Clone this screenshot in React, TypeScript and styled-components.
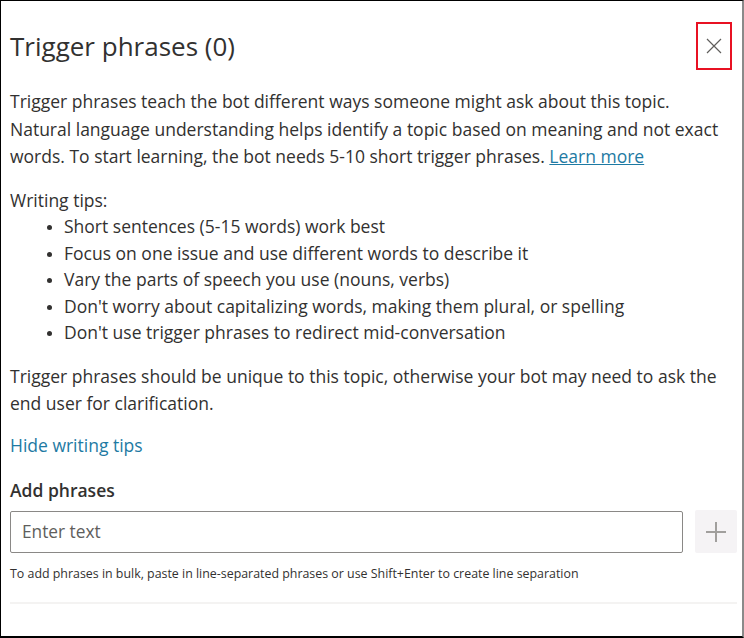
import React from "react";
import styled, { createGlobalStyle } from "styled-components";

const Global = createGlobalStyle`
  html, body { margin: 0; padding: 0; background: #fff; }
  body { font-family: "Open Sans", "Noto Sans", Arial, sans-serif; color: #323130; }
  * { box-sizing: border-box; }
`;

const Frame = styled.div`
  width: 744px;
  height: 638px;
  border-top: 1px solid #000;
  border-left: 1px solid #000;
  border-bottom: 2px solid #000;
  border-right: 2px solid #8a8a8a;
  background: #fff;
  overflow: hidden;
`;

const Panel = styled.div`
  padding: 0 5px 0 9px;
  display: flex;
  flex-direction: column;
`;

const Header = styled.header`
  display: flex;
  align-items: center;
  justify-content: space-between;
  margin-top: 21px;
  height: 48px;
`;

const Title = styled.h1`
  margin: 0;
  font-size: 26px;
  font-weight: 400;
  line-height: 48px;
  color: #323130;
`;

const CloseButton = styled.button`
  width: 36px;
  height: 48px;
  margin-right: 5px;
  border: 2px solid #e81123;
  background: #fff;
  padding: 0;
  display: flex;
  align-items: center;
  justify-content: center;
  cursor: pointer;
`;

const Text = styled.p<{ $mt: number; $lh?: number }>`
  margin: ${(p) => p.$mt}px 0 0;
  font-size: 17.5px;
  line-height: ${(p) => p.$lh ?? 27.5}px;
  color: #323130;
  white-space: nowrap;
`;

const Link = styled.a`
  color: #1e7aa3;
  text-decoration: underline;
  cursor: pointer;
`;

const Tips = styled.div`
  margin-top: 16px;
  font-size: 17.5px;
  line-height: 26.6px;
`;

const TipList = styled.ul`
  margin: 0;
  padding-left: 54px;
  list-style: disc;
  li::marker { font-size: 14px; }
`;

const PlainLink = styled.a`
  display: block;
  margin-top: 15px;
  font-size: 17.5px;
  line-height: 27px;
  color: #1e7aa3;
  cursor: pointer;
`;

const Label = styled.div`
  margin-top: 18px;
  font-size: 17.5px;
  font-weight: 600;
  line-height: 27px;
  color: #323130;
`;

const InputRow = styled.div`
  display: flex;
  align-items: center;
  gap: 12px;
  margin-top: 6px;
`;

const Input = styled.input`
  flex: 1;
  height: 42px;
  border: 1px solid #8a8886;
  border-radius: 2px;
  padding: 0 11px;
  font-family: inherit;
  font-size: 17.3px;
  color: #323130;
  outline: none;
  &::placeholder { color: #605e5c; }
`;

const AddButton = styled.button`
  width: 42px;
  height: 43px;
  border: none;
  border-radius: 2px;
  background: #f5f3f5;
  display: flex;
  align-items: center;
  justify-content: center;
  padding: 0;
`;

const Helper = styled.div`
  margin-top: 13px;
  font-size: 12.4px;
  line-height: 16px;
  color: #323130;
  white-space: nowrap;
`;

const Divider = styled.hr`
  margin: 20px 0 0;
  border: none;
  height: 2px;
  background: #f4f3f2;
`;

export default function App() {
  return (
    <>
      <Global />
      <Frame>
        <Panel>
          <Header>
            <Title>Trigger phrases (0)</Title>
            <CloseButton aria-label="Close">
              <svg width="18" height="18" viewBox="0 0 18 18">
                <path d="M2 2 L16 16 M16 2 L2 16" stroke="#605e5c" strokeWidth="1.2" fill="none" />
              </svg>
            </CloseButton>
          </Header>
          <Text $mt={18}>
            Trigger phrases teach the bot different ways someone might ask about this topic.
            <br />
            Natural language understanding helps identify a topic based on meaning and not exact
            <br />
            words. To start learning, the bot needs 5-10 short trigger phrases. <Link>Learn more</Link>
          </Text>
          <Tips>
            Writing tips:
            <TipList>
              <li>Short sentences (5-15 words) work best</li>
              <li>Focus on one issue and use different words to describe it</li>
              <li>Vary the parts of speech you use (nouns, verbs)</li>
              <li>Don't worry about capitalizing words, making them plural, or spelling</li>
              <li>Don't use trigger phrases to redirect mid-conversation</li>
            </TipList>
          </Tips>
          <Text $mt={17} $lh={27}>
            Trigger phrases should be unique to this topic, otherwise your bot may need to ask the
            <br />
            end user for clarification.
          </Text>
          <PlainLink>Hide writing tips</PlainLink>
          <Label>Add phrases</Label>
          <InputRow>
            <Input placeholder="Enter text" />
            <AddButton aria-label="Add">
              <svg width="22" height="22" viewBox="0 0 22 22">
                <path d="M11 1 V21 M1 11 H21" stroke="#a19f9d" strokeWidth="2" fill="none" />
              </svg>
            </AddButton>
          </InputRow>
          <Helper>
            To add phrases in bulk, paste in line-separated phrases or use Shift+Enter to create line separation
          </Helper>
          <Divider />
        </Panel>
      </Frame>
    </>
  );
}
